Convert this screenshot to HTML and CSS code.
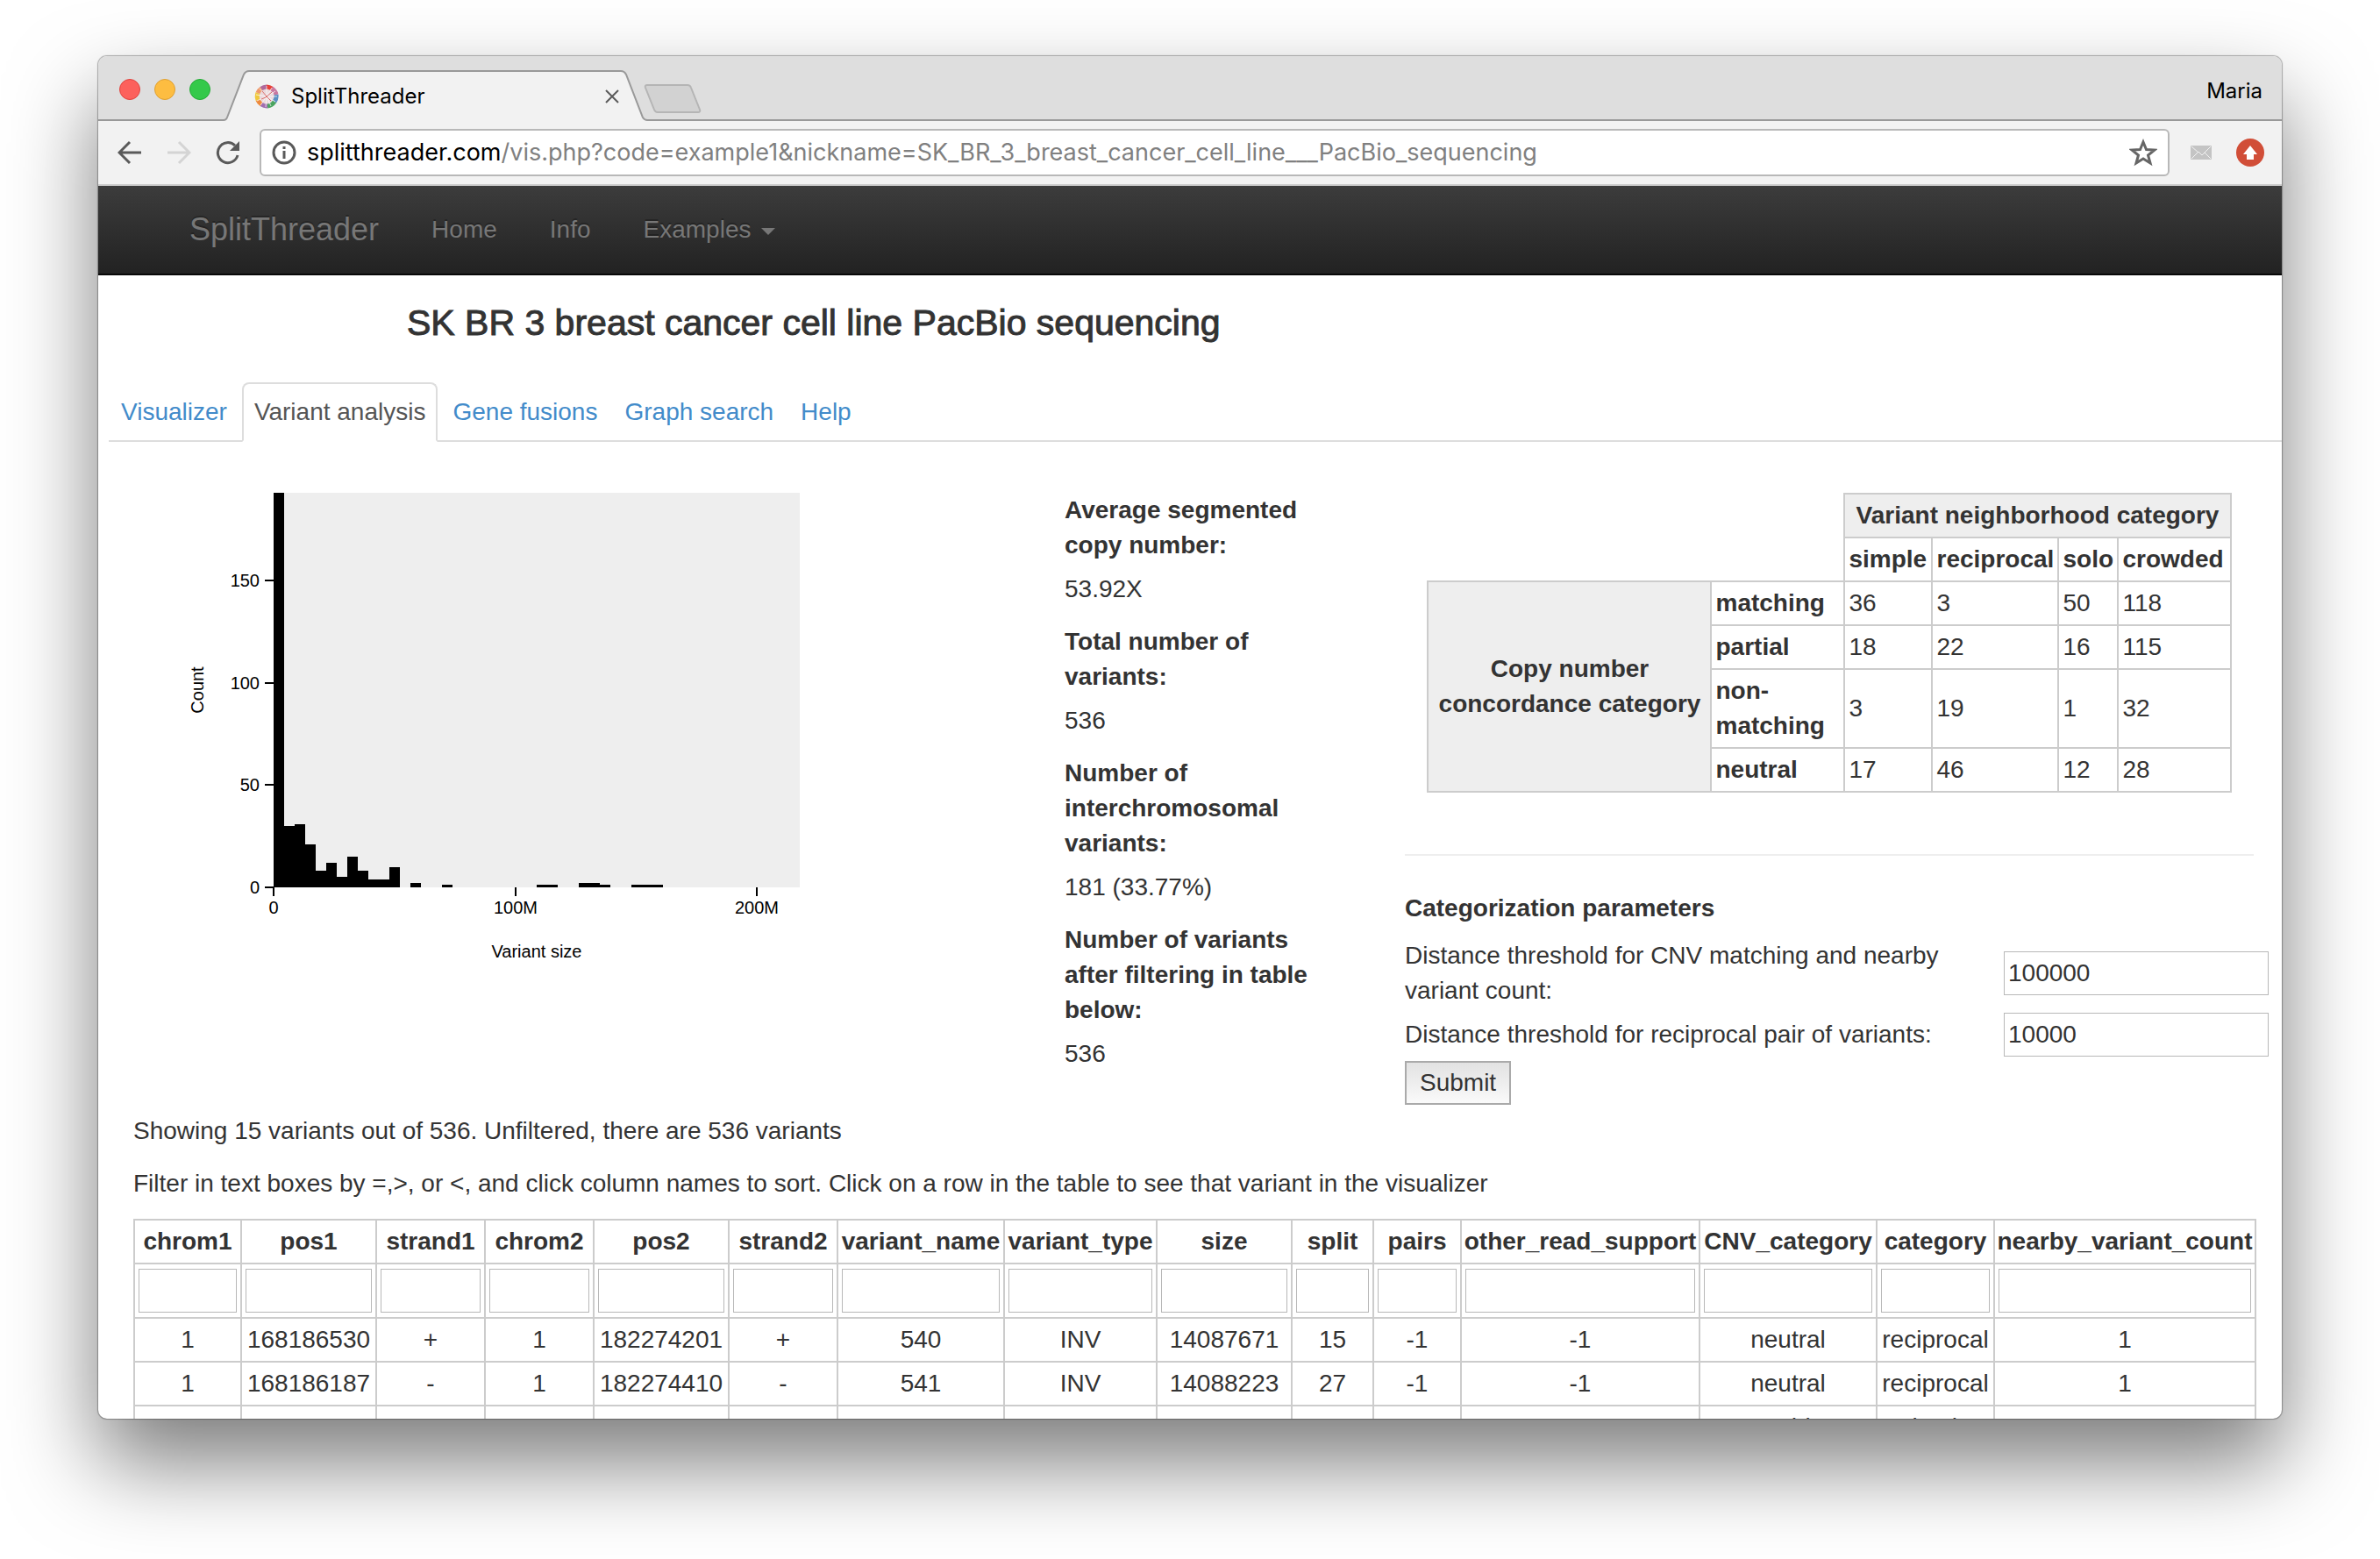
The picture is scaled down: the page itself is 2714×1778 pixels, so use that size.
FILE: index.html
```html
<!DOCTYPE html>
<html lang="en">
<head>
<meta charset="utf-8">
<title>SplitThreader</title>
<link rel="stylesheet" href="styles.css">
</head>
<body>
<div class="window">
  <header class="tabstrip">
    <div class="lights"><span class="light red"></span><span class="light yellow"></span><span class="light green"></span></div>
    <div class="browser-tab">
      <svg class="tab-shape" viewBox="0 0 486 58" aria-hidden="true"><path d="M0 57 H2 Q4 57 5 54 L24 5 Q26 1 30 1 H454 Q458 1 460 5 L479 54 Q480 57 482 57 H486 V58 H0Z" fill="#f2f2f2"/><path d="M0 57 H1 Q4 57 5 54 L24 5 Q26 1 30 1 H454 Q458 1 460 5 L479 54 Q481 57 484 57 H486" fill="none" stroke="#999" stroke-width="2"/></svg>
      <svg class="favicon" viewBox="0 0 28 28" aria-hidden="true">
        <circle cx="14" cy="14" r="12" fill="#ead9dc"/>
        <g fill="none" stroke-width="5">
          <path d="M14 3A11 11 0 0 1 20 5" stroke="#e84038"/><path d="M20 5A11 11 0 0 1 25 12" stroke="#c978a0"/>
          <path d="M25 12A11 11 0 0 1 23 20" stroke="#5a8fc4"/><path d="M23 20A11 11 0 0 1 15 25" stroke="#4aa460"/>
          <path d="M15 25A11 11 0 0 1 8 23" stroke="#a070b0"/><path d="M8 23A11 11 0 0 1 4 18" stroke="#ee8a3c"/>
          <path d="M4 18A11 11 0 0 1 4 10" stroke="#f0c83c"/><path d="M4 10A11 11 0 0 1 8 5" stroke="#ee9a6c"/><path d="M8 5A11 11 0 0 1 14 3" stroke="#b06a9c"/>
        </g>
        <g stroke="#fff" stroke-width="1" opacity=".7"><path d="M14 14L14 2M14 14L20 4M14 14L24 8M14 14L26 14M14 14L24 20M14 14L19 25M14 14L13 26M14 14L7 24M14 14L3 19M14 14L2 12M14 14L6 5"/></g>
        <path d="M9 8L14 14L19 19M20 9L13 15L8 17" stroke="#d86a68" fill="none"/>
      </svg>
      <span class="tab-title">SplitThreader</span>
      <button class="plain" aria-label="Close tab"><svg width="16" height="16" viewBox="0 0 16 16"><path d="M1 1L15 15M15 1L1 15" stroke="#5a5a5a" stroke-width="2"/></svg></button>
    </div>
    <button class="plain newtab" aria-label="New tab"><svg width="66" height="34" viewBox="0 0 66 34"><path d="M4 1H50Q53 1 54 4L64 29Q65 32 62 32H16Q13 32 12 29L2 4Q1 1 4 1Z" fill="#d2d2d2" stroke="#b5b5b5" stroke-width="2"/></svg></button>
    <span class="profile">Maria</span>
  </header>
  <div class="toolbar">
    <button class="plain" aria-label="Back"><svg width="28" height="28" viewBox="0 0 28 28"><path d="M27 14H3M14 2L2 14L14 26" fill="none" stroke="#5a5a5a" stroke-width="3"/></svg></button>
    <button class="plain" aria-label="Forward"><svg width="28" height="28" viewBox="0 0 28 28"><path d="M1 14H25M14 2L26 14L14 26" fill="none" stroke="#d4d4d4" stroke-width="3"/></svg></button>
    <button class="plain" aria-label="Reload"><svg width="28" height="28" viewBox="0 0 28 28"><path d="M25 17A11.500 11.500 0 1 1 22 6" fill="none" stroke="#5a5a5a" stroke-width="3"/><path d="M27 1V12H16Z" fill="#5a5a5a"/></svg></button>
    <div class="omnibox">
      <svg width="28" height="28" viewBox="0 0 28 28" aria-hidden="true"><circle cx="14" cy="14" r="12" fill="none" stroke="#5a5a5a" stroke-width="3"/><path d="M14 12V21M14 7V10" stroke="#5a5a5a" stroke-width="3"/></svg>
      <span class="url"><span class="host">splitthreader.com</span>/vis.php?code=example1&amp;nickname=SK_BR_3_breast_cancer_cell_line___PacBio_sequencing</span>
      <button class="plain" aria-label="Bookmark this page"><svg width="32" height="32" viewBox="0 0 32 32"><path d="M16 4L19.500 12.500L29 13L21.500 19L24 28L16 23L8 28L10.500 19L3 13L12.500 12.500Z" fill="none" stroke="#666" stroke-width="3"/></svg></button>
    </div>
    <button class="plain mail" aria-label="Mail"><svg width="24" height="16" viewBox="0 0 24 16"><rect width="24" height="16" rx="1" fill="#c4c4c4"/><path d="M1 15L9 7L13 11L23 1M1 1L9 8M16 8L23 15" fill="none" stroke="#f2f2f2" stroke-width="1"/></svg></button>
    <button class="plain" aria-label="Update"><svg width="32" height="32" viewBox="0 0 32 32"><circle cx="16" cy="16" r="16" fill="#d14e38"/><path d="M16 8L24 18H20V24H12V18H8Z" fill="#fff"/></svg></button>
  </div>

  <nav class="navbar">
    <a class="brand" href="#">SplitThreader</a>
    <a href="#">Home</a>
    <a href="#">Info</a>
    <a href="#">Examples <span class="caret"></span></a>
  </nav>

  <main>
    <h1>SK BR 3 breast cancer cell line PacBio sequencing</h1>
    <nav class="tabs">
      <a href="#">Visualizer</a>
      <a href="#" class="active">Variant analysis</a>
      <a href="#">Gene fusions</a>
      <a href="#">Graph search</a>
      <a href="#">Help</a>
    </nav>

    <div class="panels">
      <figure class="chart">
        <svg width="740" height="560" viewBox="0 0 740 560" role="img" aria-label="Histogram of variant size">
          <rect x="112" y="0" width="600" height="450" fill="#eee"/>
          <path d="M112 450V0h12V380h12V378h12V401h12V431h12V422h12V438h12V415h12V431h12V441h24V427h12V450zM268 450v-5h12v5zM304 450v-3h12v3zM412 450v-3h24v3zM460 450v-5h24v2h12v3zM520 450v-3h36v3z"/>
          <path d="M102 450h10M102 333h10M102 217h10M102 100h10M112 450v10M388 450v10M663 450v10" stroke="#000" stroke-width="2"/>
          <g class="ytick"><text x="96" y="457">0</text><text x="96" y="340">50</text><text x="96" y="224">100</text><text x="96" y="107">150</text></g>
          <g class="xtick"><text x="112" y="480">0</text><text x="388" y="480">100M</text><text x="663" y="480">200M</text><text x="412" y="530">Variant size</text><text transform="translate(32 225) rotate(-90)">Count</text></g>
        </svg>
      </figure>

      <dl class="stats">
        <dt>Average segmented copy number:</dt><dd>53.92X</dd>
        <dt>Total number of variants:</dt><dd>536</dd>
        <dt>Number of interchromosomal variants:</dt><dd>181 (33.77%)</dd>
        <dt>Number of variants after filtering in table below:</dt><dd>536</dd>
      </dl>

      <section class="side">
        <table class="matrix">
          <colgroup><col class="m-group"><col class="m-name"><col class="m-simple"><col class="m-recip"><col class="m-solo"><col class="m-crowd"></colgroup>
          <tr><td class="none" colspan="2" rowspan="2"></td><th class="shade" colspan="4">Variant neighborhood category</th></tr>
          <tr><th>simple</th><th>reciprocal</th><th>solo</th><th>crowded</th></tr>
          <tr><th class="shade" rowspan="4">Copy number concordance category</th><th>matching</th><td>36</td><td>3</td><td>50</td><td>118</td></tr>
          <tr><th>partial</th><td>18</td><td>22</td><td>16</td><td>115</td></tr>
          <tr><th>non-matching</th><td>3</td><td>19</td><td>1</td><td>32</td></tr>
          <tr><th>neutral</th><td>17</td><td>46</td><td>12</td><td>28</td></tr>
        </table>
        <hr>
        <form class="params">
          <h2>Categorization parameters</h2>
          <label for="cnv">Distance threshold for CNV matching and nearby variant count:</label>
          <input id="cnv" type="text" value="100000">
          <label for="pair">Distance threshold for reciprocal pair of variants:</label>
          <input id="pair" type="text" value="10000">
          <button class="submit" type="button">Submit</button>
        </form>
      </section>
    </div>

    <section class="results">
      <p>Showing 15 variants out of 536. Unfiltered, there are 536 variants</p>
      <p>Filter in text boxes by =,&gt;, or &lt;, and click column names to sort. Click on a row in the table to see that variant in the visualizer</p>
      <table class="variants">
        <colgroup><col class="c-chrom"><col class="c-pos"><col class="c-strand"><col class="c-strand"><col class="c-pos"><col class="c-strand"><col class="c-name"><col class="c-type"><col class="c-pos"><col class="c-split"><col class="c-pairs"><col class="c-other"><col class="c-cnv"><col class="c-cat"><col class="c-near"></colgroup>
        <thead>
          <tr><th>chrom1</th><th>pos1</th><th>strand1</th><th>chrom2</th><th>pos2</th><th>strand2</th><th>variant_name</th><th>variant_type</th><th>size</th><th>split</th><th>pairs</th><th>other_read_support</th><th>CNV_category</th><th>category</th><th>nearby_variant_count</th></tr>
          <tr class="filters"><td><input type="text" aria-label="Filter chrom1"></td><td><input type="text" aria-label="Filter pos1"></td><td><input type="text" aria-label="Filter strand1"></td><td><input type="text" aria-label="Filter chrom2"></td><td><input type="text" aria-label="Filter pos2"></td><td><input type="text" aria-label="Filter strand2"></td><td><input type="text" aria-label="Filter variant_name"></td><td><input type="text" aria-label="Filter variant_type"></td><td><input type="text" aria-label="Filter size"></td><td><input type="text" aria-label="Filter split"></td><td><input type="text" aria-label="Filter pairs"></td><td><input type="text" aria-label="Filter other_read_support"></td><td><input type="text" aria-label="Filter CNV_category"></td><td><input type="text" aria-label="Filter category"></td><td><input type="text" aria-label="Filter nearby_variant_count"></td></tr>
        </thead>
        <tbody>
          <tr><td>1</td><td>168186530</td><td>+</td><td>1</td><td>182274201</td><td>+</td><td>540</td><td>INV</td><td>14087671</td><td>15</td><td>-1</td><td>-1</td><td>neutral</td><td>reciprocal</td><td>1</td></tr>
          <tr><td>1</td><td>168186187</td><td>-</td><td>1</td><td>182274410</td><td>-</td><td>541</td><td>INV</td><td>14088223</td><td>27</td><td>-1</td><td>-1</td><td>neutral</td><td>reciprocal</td><td>1</td></tr>
          <tr><td>1</td><td>153028492</td><td>-</td><td>1</td><td>153097749</td><td>+</td><td>654</td><td>DEL</td><td>69257</td><td>21</td><td>-1</td><td>-1</td><td>matching</td><td>simple</td><td>1</td></tr>
        </tbody>
      </table>
    </section>
  </main>
</div>
</body>
</html>
```
FILE: styles.css
```css
* { box-sizing: border-box; }
body {
  margin: 0;
  padding: 64px 112px 160px;
  background: #fff;
  color: #333;
  font: 28px/40px "Liberation Sans", Arial, sans-serif;
  overflow: hidden;
}
a { color: #428bca; text-decoration: none; }
input, button { font: inherit; color: inherit; }
.plain { display: block; flex: none; padding: 0; border: 0; background: none; line-height: 0; }
svg { display: block; flex: none; }

.window {
  height: calc(100vh - 224px);
  overflow: hidden;
  border-radius: 10px;
  background: #fff;
  box-shadow: 0 0 1px 1px rgba(0,0,0,.3), 0 50px 100px rgba(0,0,0,.52);
}

/* browser chrome */
.tabstrip, .toolbar { font-family: Inter, "Liberation Sans", sans-serif; }
.tabstrip { display: flex; align-items: flex-end; height: 74px; padding-right: 22px; background: linear-gradient(#dedede, #dedede 72px, #999 72px); }
.lights { display: flex; gap: 16px; padding: 0 14px 24px 24px; }
.light { width: 24px; height: 24px; border-radius: 50%; }
.red { background: #fc615c; border: 1px solid #e0443f; }
.yellow { background: #fdbd41; border: 1px solid #dfa032; }
.green { background: #34c94a; border: 1px solid #24ab35; }
.browser-tab { position: relative; display: flex; align-items: center; gap: 14px; width: 486px; height: 58px; padding: 2px 34px 0 36px; font-size: 24px; color: #000; }
.tab-shape { position: absolute; inset: 0; width: 100%; height: 100%; }
.browser-tab > :not(.tab-shape) { position: relative; }
.favicon { width: 28px; height: 28px; }
.tab-title { flex: 1; }
.newtab { margin-left: -6px; padding-bottom: 8px; }
.profile { margin-left: auto; padding-bottom: 14px; font-size: 24px; color: #000; }
.toolbar { display: flex; align-items: center; height: 74px; gap: 28px; padding: 0 20px 0 22px; background: #f2f2f2; border-bottom: 2px solid #ccc; }
.omnibox { display: flex; align-items: center; flex: 1; gap: 12px; height: 54px; margin-left: -6px; padding: 0 12px; border: 2px solid #b8b8b8; border-radius: 6px; background: #fff; }
.url { flex: 1; font-size: 27px; color: #808080; }
.host { color: #000; }
.mail { margin-left: -4px; }

/* site header */
.navbar { display: flex; align-items: center; height: 102px; padding: 0 74px; background: linear-gradient(#3c3c3c, #222); border-bottom: 2px solid #080808; }
.navbar a { padding: 0 30px; color: #777; text-shadow: 0 -2px 0 rgba(0,0,0,.25); }
.navbar .brand { font-size: 36px; }
.caret { display: inline-block; margin-left: 4px; vertical-align: middle; border: 8px solid transparent; border-top-color: #777; border-bottom: 0; }

h1 { margin: 34px 0 48px 352px; font-size: 41px; line-height: 40px; font-weight: 500; -webkit-text-stroke: 1px #333; }
.tabs { display: flex; gap: 3px; margin-left: 12px; border-bottom: 2px solid #ddd; }
.tabs a { margin-bottom: -2px; padding: 12px; border: 2px solid transparent; border-radius: 8px 8px 0 0; }
.tabs .active { color: #555; background: #fff; border-color: #ddd #ddd #fff; }

.panels { display: grid; grid-template-columns: 1014px 290px 1fr; column-gap: 0; padding: 58px 0 0 88px; }
.chart { margin: 0; }
.chart text { font-size: 20px; fill: #000; }
.ytick { text-anchor: end; }
.xtick { text-anchor: middle; }
.stats { margin: 0; }
.stats dt { font-weight: bold; }
.stats dd { margin: 10px 0 20px; }

table { border-collapse: collapse; table-layout: fixed; }
th, td { padding: 4px; border: 2px solid #ccc; }
.side { margin-left: 98px; padding-right: 32px; }
.matrix { width: 916px; margin: 0 auto; }
.matrix th { text-align: left; }
.matrix .shade { background: #eee; text-align: center; }
.matrix .none { border: 0; }
.m-group { width: 323px; }
.m-name { width: 152px; }
.m-simple { width: 100px; }
.m-recip { width: 144px; }
.m-solo { width: 68px; }
.m-crowd { width: 128px; }
hr { margin: 70px 0 40px; border: 0; border-top: 2px solid #eee; }
input { height: 50px; border: 1px solid #b8b8b8; background: #fff; }
.params { display: grid; grid-template-columns: 624px 302px; column-gap: 59px; row-gap: 5px; align-items: center; margin-right: -32px; }
.params h2 { grid-column: 1 / -1; margin: 0 0 9px; font-size: 28px; line-height: 40px; }
.params input { width: 302px; padding: 0 4px; }
.submit { justify-self: start; height: 50px; padding: 0 15px; border: 2px solid #aaa; background: linear-gradient(#e2e2e2, #fafafa); }

.results { padding: 10px 31px 0 40px; }
.results p { margin: 0 0 20px; }
.variants { width: 100%; text-align: center; }
.variants th { padding: 4px 0; }
.filters td { padding: 5px 4px; }
.filters input { display: block; width: 100%; }
.c-chrom { width: 122px; }
.c-pos { width: 154px; }
.c-strand { width: 124px; }
.c-name { width: 190px; }
.c-type { width: 174px; }
.c-split { width: 93px; }
.c-pairs { width: 100px; }
.c-other { width: 272px; }
.c-cnv { width: 202px; }
.c-cat { width: 134px; }
.c-near { width: 298px; }
```
